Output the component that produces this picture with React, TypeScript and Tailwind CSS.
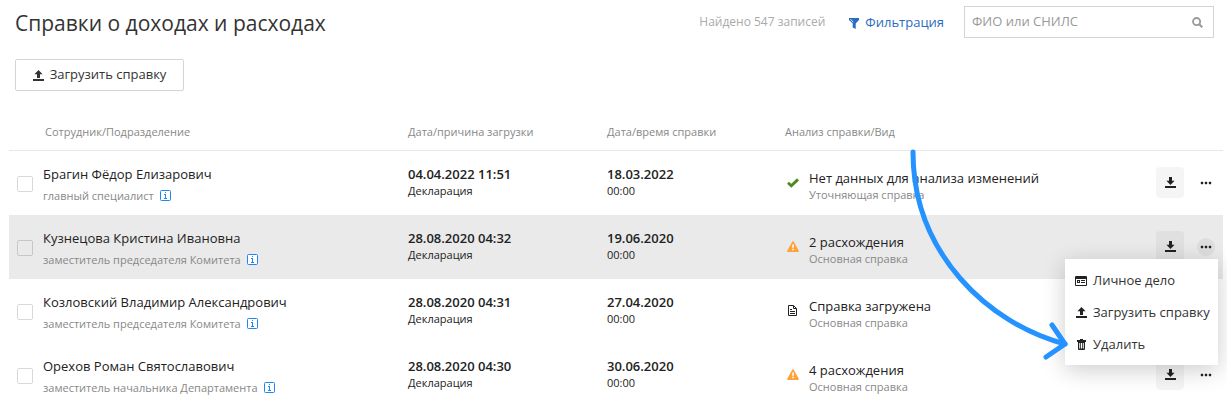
import React from "react";

type Status = "ok" | "warning" | "document";

interface RecordRow {
  name: string;
  position: string;
  uploaded: string;
  reason: string;
  date: string;
  time: string;
  status: Status;
  analysis: string;
  kind: string;
}

const rows: RecordRow[] = [
  { name: "Брагин Фёдор Елизарович", position: "главный специалист", uploaded: "04.04.2022 11:51", reason: "Декларация", date: "18.03.2022", time: "00:00", status: "ok", analysis: "Нет данных для анализа изменений", kind: "Уточняющая справка" },
  { name: "Кузнецова Кристина Ивановна", position: "заместитель председателя Комитета", uploaded: "28.08.2020 04:32", reason: "Декларация", date: "19.06.2020", time: "00:00", status: "warning", analysis: "2 расхождения", kind: "Основная справка" },
  { name: "Козловский Владимир Александрович", position: "заместитель председателя Комитета", uploaded: "28.08.2020 04:31", reason: "Декларация", date: "27.04.2020", time: "00:00", status: "document", analysis: "Справка загружена", kind: "Основная справка" },
  { name: "Орехов Роман Святославович", position: "заместитель начальника Департамента", uploaded: "28.08.2020 04:30", reason: "Декларация", date: "30.06.2020", time: "00:00", status: "warning", analysis: "4 расхождения", kind: "Основная справка" },
];

const openRow = 1;

function UploadIcon() {
  return (
    <svg width="11" height="11" viewBox="0 0 11 11" fill="currentColor" aria-hidden="true">
      <path d="M5.5 0 9.6 4.2H7V8H4V4.2H1.4ZM0 9h11v2H0Z" />
    </svg>
  );
}

function DownloadIcon() {
  return (
    <svg width="11" height="11" viewBox="0 0 11 11" fill="currentColor" aria-hidden="true">
      <path d="M4 0h3v3.8h2.6L5.5 8 1.4 3.8H4ZM0 9h11v2H0Z" />
    </svg>
  );
}

function FilterIcon() {
  return (
    <svg width="10" height="11" viewBox="0 0 10 11" aria-hidden="true">
      <path d="M0 0h10v2L6.7 5.6V11L3.7 9.6V5.6L0 2Z" fill="currentColor" />
      <path d="M1.5 1.2 4.2 4.2" stroke="#fff" strokeWidth="0.9" />
    </svg>
  );
}

function SearchIcon() {
  return (
    <svg width="11" height="11" viewBox="0 0 11 11" fill="none" stroke="currentColor" aria-hidden="true">
      <circle cx="4.6" cy="4.6" r="3.6" strokeWidth="1.8" />
      <path d="m7.2 7.2 3.1 3.1" strokeWidth="2" />
    </svg>
  );
}

function InfoIcon() {
  return (
    <svg width="11" height="11" viewBox="0 0 11 11" aria-hidden="true">
      <rect x="0.5" y="0.5" width="10" height="10" rx="1" fill="#fff" stroke="#1e88f0" />
      <path d="M5 2h1v1H5ZM4 4h2v4h1v1H4V8h1V5H4Z" fill="#1e88f0" />
    </svg>
  );
}

function DotsIcon() {
  return (
    <svg width="12" height="4" viewBox="0 0 12 4" fill="#222" aria-hidden="true">
      <rect x="0.8" y="0.8" width="2.4" height="2.4" rx="0.6" />
      <rect x="4.8" y="0.8" width="2.4" height="2.4" rx="0.6" />
      <rect x="8.8" y="0.8" width="2.4" height="2.4" rx="0.6" />
    </svg>
  );
}

function CardIcon() {
  return (
    <svg width="12" height="10" viewBox="0 0 12 10" fill="currentColor" aria-hidden="true">
      <path fillRule="evenodd" d="M1 0h10a1 1 0 0 1 1 1v8a1 1 0 0 1-1 1H1a1 1 0 0 1-1-1V1a1 1 0 0 1 1-1ZM1 3v6h10V3Z" />
      <path fillRule="evenodd" d="M2 4h3v3H2ZM3 5v1h1V5ZM6 4h4v1H6ZM6 6h4v1H6Z" />
    </svg>
  );
}

function TrashIcon() {
  return (
    <svg width="9" height="11" viewBox="0 0 9 11" fill="currentColor" aria-hidden="true">
      <path fillRule="evenodd" d="M3 0h3v1h3v2H0V1h3ZM1 3h7v7a1 1 0 0 1-1 1H2a1 1 0 0 1-1-1ZM2.2 4v5.5h1V4ZM4 4v5.5h1V4ZM5.8 4v5.5h1V4Z" />
    </svg>
  );
}

function StatusIcon({ status }: { status: Status }) {
  if (status === "ok") {
    return (
      <svg width="12" height="10" viewBox="0 0 12 10" fill="none" aria-hidden="true">
        <path d="M1 4.8 4.3 7.8 11 1.4" stroke="#4f8a1e" strokeWidth="2.9" />
      </svg>
    );
  }
  if (status === "warning") {
    return (
      <svg width="12" height="11" viewBox="0 0 12 11" aria-hidden="true">
        <path d="M6 .9 11.2 10.2H.8Z" fill="#ffa23a" stroke="#ffa23a" strokeWidth="1.4" strokeLinejoin="round" />
        <path d="M5.2 3.6h1.6v3.2H5.2ZM5.2 7.8h1.6v1.4H5.2Z" fill="#fff" />
      </svg>
    );
  }
  return (
    <svg width="11" height="11" viewBox="-1 0 11 11" fill="none" stroke="#222" aria-hidden="true">
      <path d="M.5.5h5l3 3v7h-8Z" />
      <path d="M5.5.5v3h3M2 4.5h2M2 6.5h5M2 8.5h5" />
    </svg>
  );
}

function RowMenu() {
  return (
    <>
      <div role="menu" className="absolute top-[44px] right-[5px] z-10 flex w-[153px] flex-col bg-white pt-1.5 pb-1 shadow-[0_5px_22px_rgba(0,0,0,0.2)]">
        {[
          { label: "Личное дело", icon: <CardIcon /> },
          { label: "Загрузить справку", icon: <UploadIcon /> },
          { label: "Удалить", icon: <TrashIcon /> },
        ].map((item) => (
          <button key={item.label} type="button" role="menuitem" className="flex h-8 items-center gap-1.5 pl-2.5 text-left text-[13px] whitespace-nowrap text-[#333]">
            <span className="flex w-3 shrink-0 justify-center text-[#222]">{item.icon}</span>
            {item.label}
          </button>
        ))}
      </div>
      <svg width="166" height="220" viewBox="0 0 166 220" fill="none" stroke="#2492ff" strokeWidth="5" strokeLinecap="round" strokeLinejoin="round" aria-hidden="true" className="pointer-events-none absolute -top-[69px] right-[150px] z-20">
        <path d="M6 6C6 108 82 178 158 198" />
        <path d="M145 179 158 198 139 211" />
      </svg>
    </>
  );
}

export default function App() {
  return (
    <main className="bg-white pr-1 pl-[9px] pb-4 font-['Open_Sans','Noto_Sans',sans-serif] text-[#222]">
      <header className="flex items-center pt-1.5 pr-[9px] pl-1.5">
        <h1 className="pt-0.5 text-[21px] leading-[30px] text-[#333]">Справки о доходах и расходах</h1>
        <div className="ml-auto flex items-center">
          <span className="text-xs text-[#aaa]">Найдено 547 записей</span>
          <button type="button" className="ml-6 flex items-center gap-1.5 pt-0.5 text-[13px] text-[#2a6cc0]">
            <FilterIcon />
            Фильтрация
          </button>
          <label className="ml-5 flex h-8 w-[250px] items-center border border-[#d5d5d5] pr-2.5 pl-[7px] text-[#999]">
            <input type="text" aria-label="ФИО или СНИЛС" placeholder="ФИО или СНИЛС" className="min-w-0 flex-1 text-[13px] outline-none placeholder:text-[#999]" />
            <SearchIcon />
          </label>
        </div>
      </header>

      <div className="mt-[21px] ml-1.5 flex">
        <button type="button" className="flex h-8 w-[169px] items-center justify-center gap-1.5 rounded-xs border border-[#d5d5d5] text-[13px] whitespace-nowrap text-[#333]">
          <UploadIcon />
          Загрузить справку
        </button>
      </div>

      <table className="mt-[22px] w-full table-fixed border-collapse text-left">
        <colgroup>
          <col className="w-[34px]" />
          <col className="w-[365px]" />
          <col className="w-[199px]" />
          <col className="w-[178px]" />
          <col />
          <col className="w-[76px]" />
        </colgroup>
        <thead>
          <tr className="h-[37px] border-b border-[#e8e8e8] text-[11px] text-[#888]">
            <th className="p-0" aria-label="Выбор" />
            <th className="p-0 pt-0.5 pl-0.5 font-normal">Сотрудник/Подразделение</th>
            <th className="p-0 pt-0.5 font-normal">Дата/причина загрузки</th>
            <th className="p-0 pt-0.5 font-normal">Дата/время справки</th>
            <th className="p-0 pt-0.5 font-normal">Анализ справки/Вид</th>
            <th className="p-0" aria-label="Действия" />
          </tr>
        </thead>
        <tbody>
          {rows.map((row, index) => (
            <tr key={row.name} className={index === openRow ? "h-16 bg-[#eaeaea]" : "h-16"}>
              <td className="p-0 pt-0.5 pl-2">
                <input type="checkbox" aria-label={row.name} className="block size-4 appearance-none rounded-xs border border-black/15" />
              </td>
              <td className="p-0 pt-1">
                <div className="text-[13px] leading-5">{row.name}</div>
                <div className="mt-0.5 flex items-center gap-1.5 text-[11px] leading-5 text-[#888]">
                  {row.position}
                  <InfoIcon />
                </div>
              </td>
              <td className="p-0 pb-[3px]">
                <div className="text-[13px] leading-5 font-semibold">{row.uploaded}</div>
                <div className="text-[11px] leading-[14px]">{row.reason}</div>
              </td>
              <td className="p-0 pb-[3px]">
                <div className="text-[13px] leading-5 font-semibold">{row.date}</div>
                <div className="text-[11px] leading-[14px]">{row.time}</div>
              </td>
              <td className="p-0">
                <div className="flex items-center">
                  <span className="flex w-6 shrink-0 pl-0.5">
                    <StatusIcon status={row.status} />
                  </span>
                  <div className="pt-1">
                    <div className="text-[13px] leading-5">{row.analysis}</div>
                    <div className="text-[11px] leading-[14px] text-[#888]">{row.kind}</div>
                  </div>
                </div>
              </td>
              <td className="p-0">
                <div className="relative flex h-16 items-center pl-[9px]">
                  <button type="button" aria-label="Скачать" className="flex h-[31px] w-7 items-center justify-center rounded bg-black/[0.04] text-[#222]">
                    <DownloadIcon />
                  </button>
                  <button type="button" aria-label="Ещё" className={index === openRow ? "ml-[13px] flex size-[18px] items-center justify-center rounded-full bg-black/[0.05]" : "ml-[13px] flex size-[18px] items-center justify-center rounded-full"}>
                    <DotsIcon />
                  </button>
                  {index === openRow && <RowMenu />}
                </div>
              </td>
            </tr>
          ))}
        </tbody>
      </table>
    </main>
  );
}
